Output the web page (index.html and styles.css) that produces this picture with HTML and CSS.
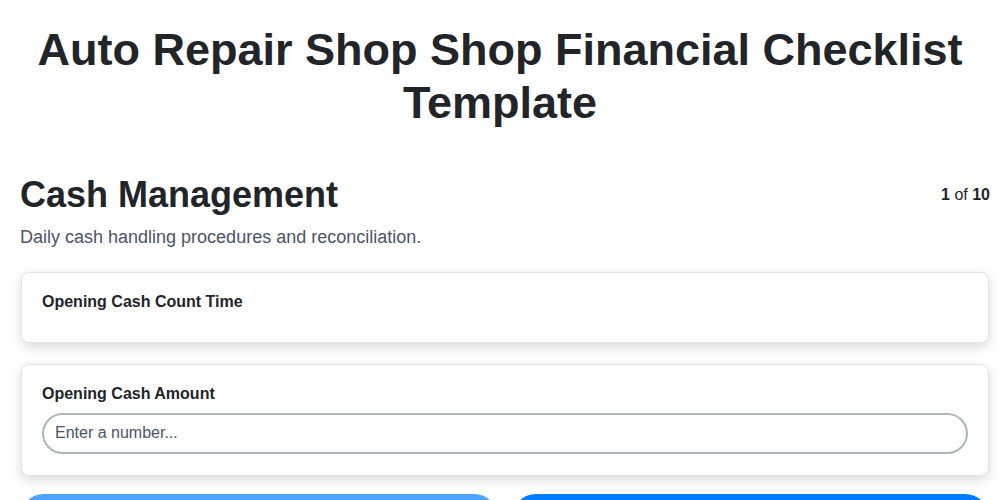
FILE: index.html
```html
<!DOCTYPE html>
<html lang="en">
<head>
    <meta charset="UTF-8">
    <meta name="viewport" content="width=device-width, initial-scale=1.0">
    <title>Auto Repair Shop Shop Financial Checklist Template</title>
    <link rel="stylesheet" href="styles.css">
</head>
<body>
    <div class="page">
        <h1 class="title">Auto Repair Shop Shop Financial Checklist Template</h1>

        <div class="content">
            <div class="section-head">
                <h2>Cash Management</h2>
                <div class="step"><b>1</b> of <b>10</b></div>
            </div>
            <p class="section-desc">Daily cash handling procedures and reconciliation.</p>

            <div class="card">
                <label class="field-label">Opening Cash Count Time</label>
            </div>

            <div class="card">
                <label class="field-label" for="cash-amount">Opening Cash Amount</label>
                <input type="text" id="cash-amount" class="field-input" placeholder="Enter a number...">
            </div>

            <div class="nav">
                <button class="btn btn-prev">Previous</button>
                <button class="btn btn-next">Next</button>
            </div>
        </div>
    </div>
</body>
</html>
```

FILE: styles.css
```css
body {
    margin: 0;
    padding: 0;
    font-family: "Liberation Sans", Arial, sans-serif;
    color: #212529;
    background: #fff;
}

.page {
    padding: 23px 20px 20px;
}

.title {
    margin: 0 0 44px;
    font-size: 45px;
    line-height: 53px;
    text-align: center;
}

.content {
    margin: 0 -9px 0 1px;
}

.section-head {
    display: flex;
    justify-content: space-between;
    align-items: center;
    margin-left: -1px;
}

.section-head h2 {
    margin: 0;
    font-size: 36px;
    line-height: 1.2;
}

.step {
    font-size: 16px;
    margin-right: -1px;
}

.section-desc {
    margin: 11px 0 23px -1px;
    font-size: 18px;
    line-height: 1.2;
    color: #4a5568;
}

.card {
    background: #fff;
    border: 1px solid #e2e4ea;
    border-radius: 8px;
    padding: 19px 20px 21px;
    margin-bottom: 21px;
    box-shadow: 0 4px 12px rgba(0, 0, 0, 0.15);
}

.field-label {
    display: block;
    padding-top: 1px;
    font-size: 16px;
    font-weight: bold;
    line-height: 18px;
    margin-bottom: 10px;
}

.field-input {
    display: block;
    box-sizing: border-box;
    width: 100%;
    height: 41px;
    padding: 0 11px;
    border: 2px solid #adb5bd;
    border-radius: 21px;
    font-family: inherit;
    font-size: 16px;
    color: #212529;
    outline: none;
}

.field-input::placeholder {
    color: #4a5568;
}

.nav {
    display: flex;
    gap: 14px;
    margin-top: -3px;
    margin-left: -1px;
}

.btn {
    flex: 1;
    height: 48px;
    border: none;
    border-radius: 24px;
    color: #fff;
    font-family: inherit;
    font-size: 16px;
    font-weight: bold;
}

.btn-prev {
    background: #4da3ff;
}

.btn-next {
    background: #007bff;
}
```
